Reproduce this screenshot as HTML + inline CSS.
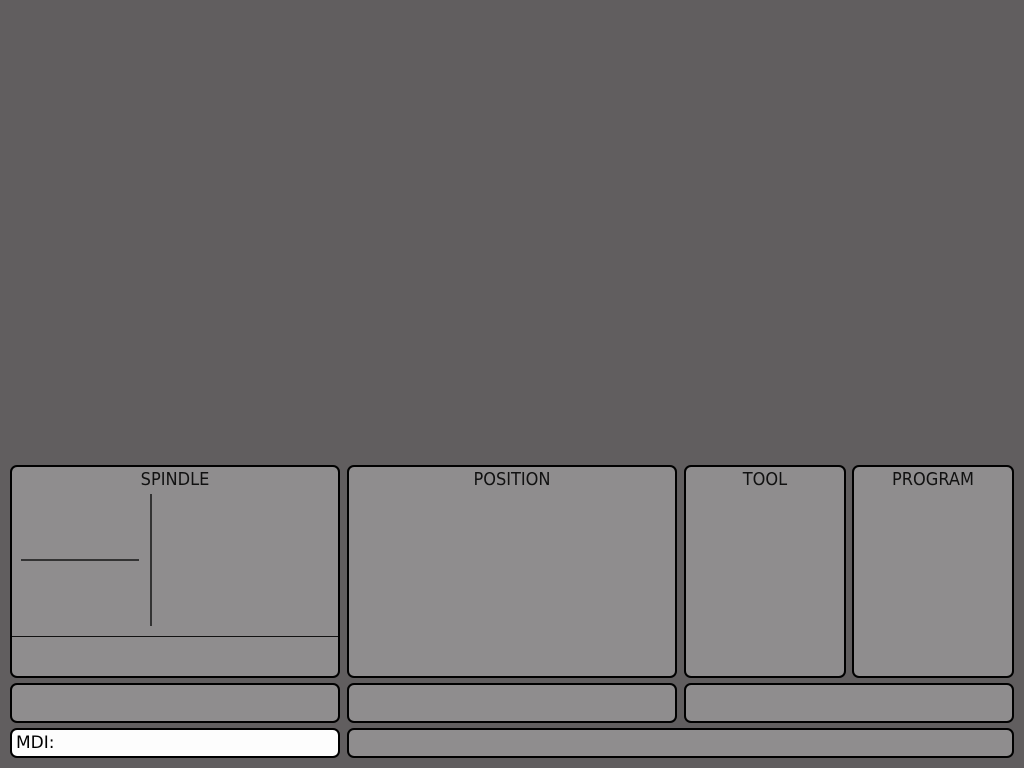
<!DOCTYPE html>
<html><head><style>
body{margin:0;width:1024px;height:768px;background:#615e5f;position:relative;overflow:hidden;font-family:"DejaVu Sans Condensed","DejaVu Sans","Liberation Sans",sans-serif;}
.b{position:absolute;box-sizing:border-box;border:2px solid #000;border-radius:7px;background:#8f8d8e;}
.t{position:absolute;top:2px;left:0;right:0;text-align:center;font-size:18px;color:#111;}
.l{position:absolute;background:#333;}
</style></head><body>
<div class="b" style="left:10px;top:465px;width:330px;height:213px">
 <div class="t">SPINDLE</div>
 <div class="l" style="left:9px;top:92px;width:118px;height:2px"></div>
 <div class="l" style="left:138px;top:27px;width:2px;height:132px"></div>
 <div style="position:absolute;left:0;right:0;top:169px;height:1px;background:#111"></div>
</div>
<div class="b" style="left:347px;top:465px;width:330px;height:213px"><div class="t">POSITION</div></div>
<div class="b" style="left:684px;top:465px;width:162px;height:213px"><div class="t">TOOL</div></div>
<div class="b" style="left:852px;top:465px;width:162px;height:213px"><div class="t">PROGRAM</div></div>
<div class="b" style="left:10px;top:683px;width:330px;height:40px"></div>
<div class="b" style="left:347px;top:683px;width:330px;height:40px"></div>
<div class="b" style="left:684px;top:683px;width:330px;height:40px"></div>
<div class="b" style="left:10px;top:728px;width:330px;height:30px;background:#fdfdfd"><div style="position:absolute;left:4px;top:3px;font-size:17px;font-family:'DejaVu Sans',sans-serif;color:#000">MDI:</div></div>
<div class="b" style="left:347px;top:728px;width:667px;height:30px"></div>
</body></html>
